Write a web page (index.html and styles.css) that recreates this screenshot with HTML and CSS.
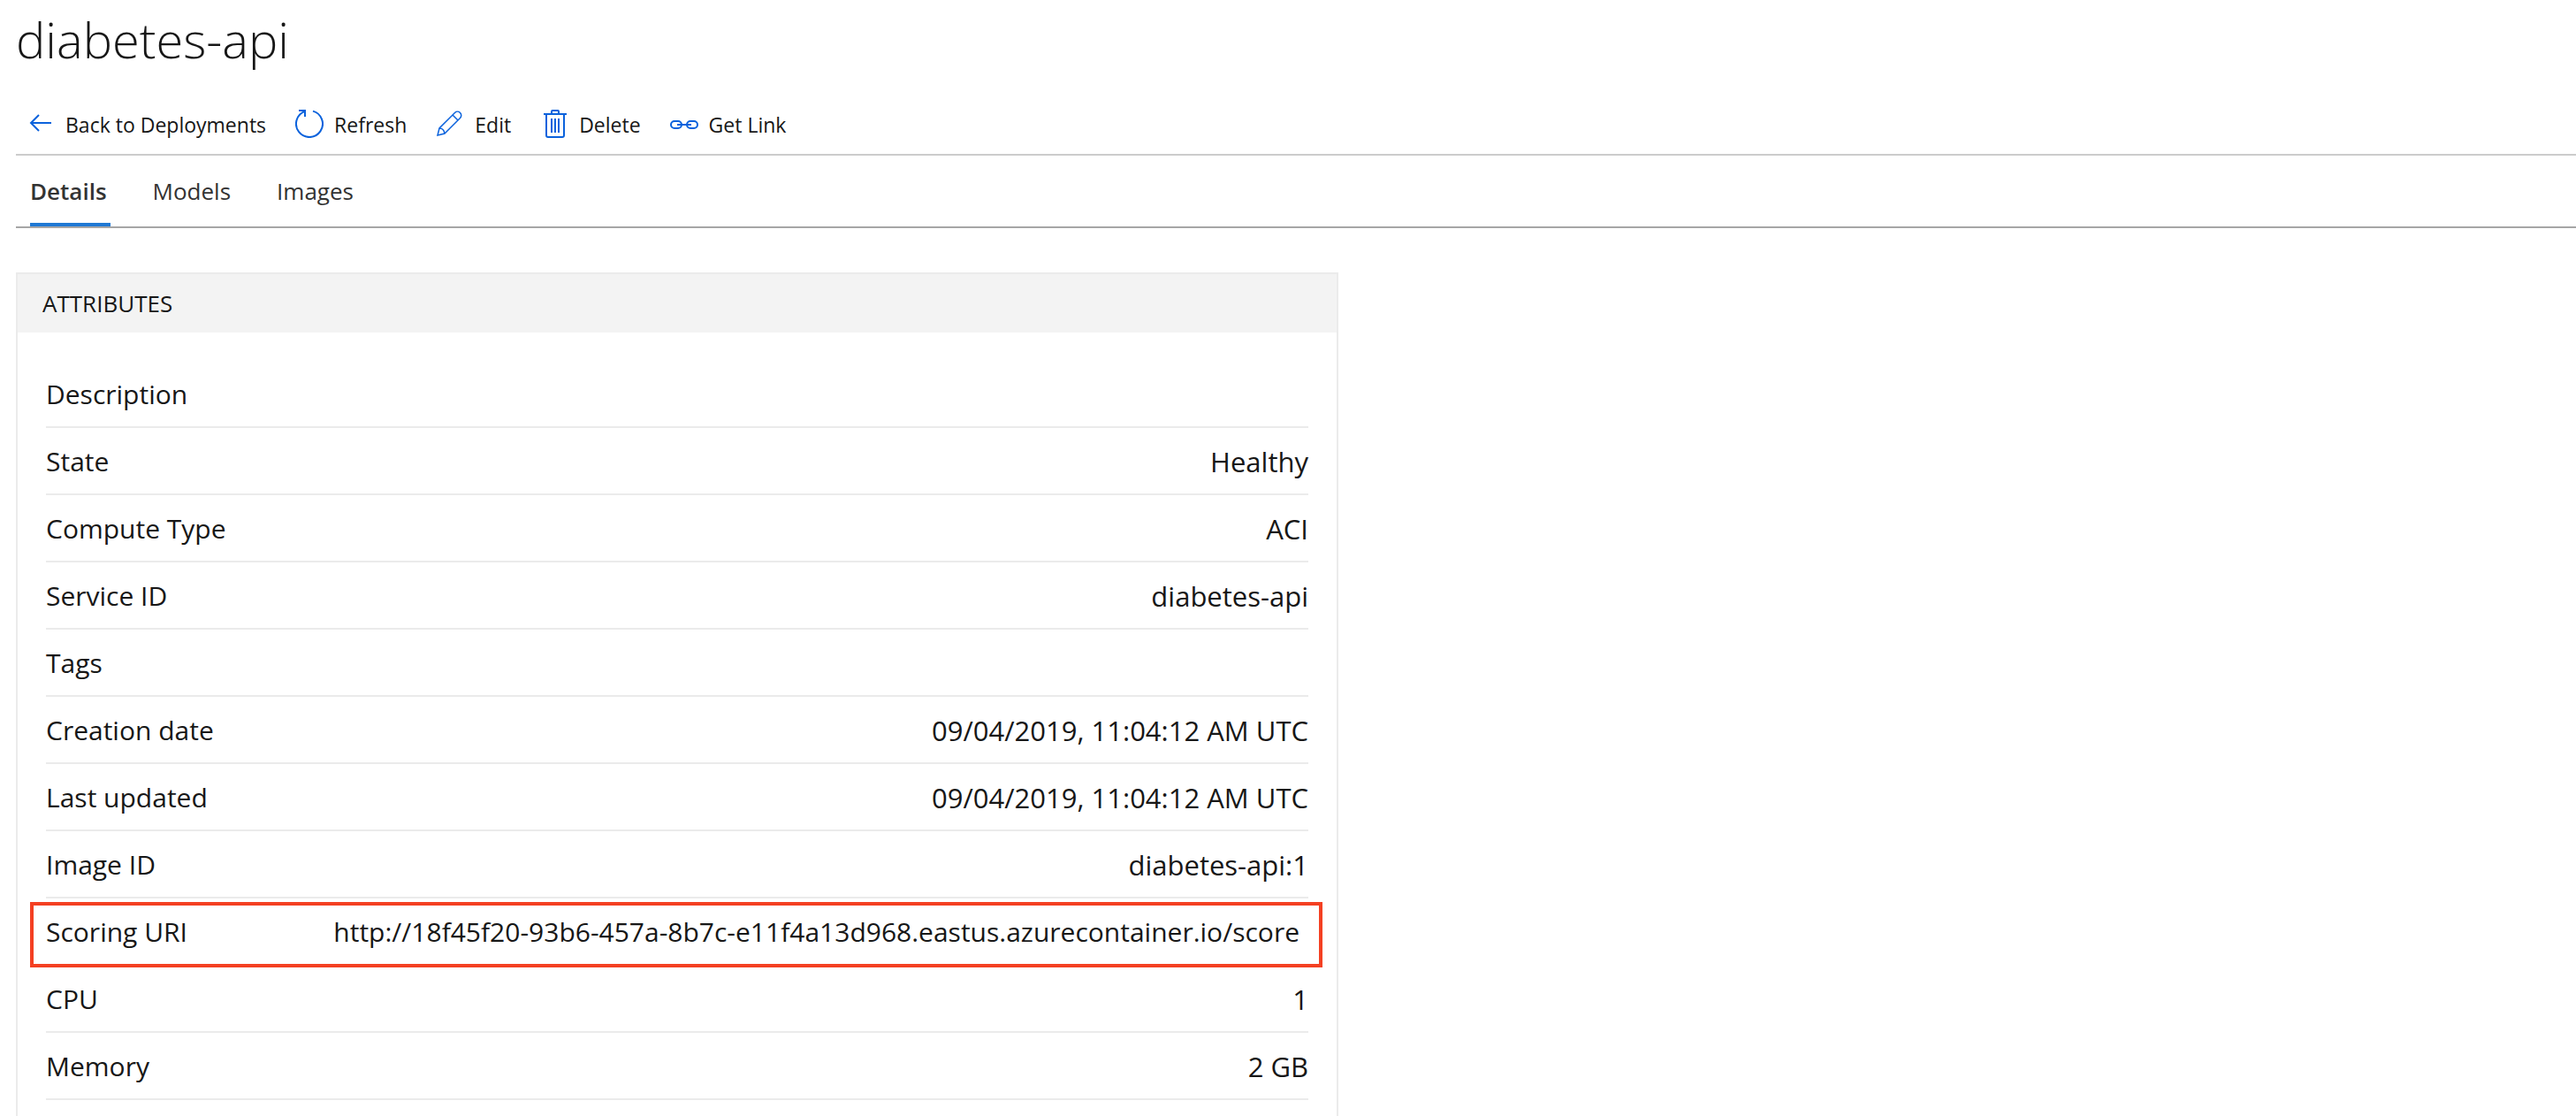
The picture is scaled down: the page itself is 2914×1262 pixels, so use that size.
FILE: index.html
```html
<!DOCTYPE html>
<html lang="en">
<head>
  <meta charset="utf-8">
  <meta name="viewport" content="width=device-width, initial-scale=1">
  <title>diabetes-api</title>
  <link rel="stylesheet" href="styles.css">
</head>
<body>
  <main class="page">
    <h1 class="title">diabetes-api</h1>

    <div class="toolbar">
      <button class="command" type="button">
        <svg class="icon" viewBox="0 0 32 32" aria-hidden="true"><path d="M28 15H5M14 6l-9 9 9 9"/></svg>
        Back to Deployments
      </button>
      <button class="command" type="button">
        <svg class="icon" viewBox="0 0 32 32" aria-hidden="true"><path d="M20 1.600A15 15 0 1 1 11 1.900M4 1h7v7"/></svg>
        Refresh
      </button>
      <button class="command" type="button">
        <svg class="icon thin" viewBox="0 0 32 32" aria-hidden="true"><path d="M2 29l2-8L21.500 3.500a4.200 4.200 0 0 1 6 6L10 27zM19 6l6 6M4 21q5 0 6 6"/></svg>
        Edit
      </button>
      <button class="command" type="button">
        <svg class="icon" viewBox="0 0 32 32" aria-hidden="true"><path d="M4 5h26M7 5v24a2 2 0 0 0 2 2h16a2 2 0 0 0 2-2V5M13 5V2a1 1 0 0 1 1-1h6a1 1 0 0 1 1 1v3M13 10v16M17 10v16M21 10v16"/></svg>
        Delete
      </button>
      <button class="command" type="button">
        <svg class="icon" viewBox="0 0 32 32" aria-hidden="true"><rect x="1" y="13" width="12" height="8" rx="4"/><rect x="19" y="13" width="12" height="8" rx="4"/><path d="M8 17h16"/></svg>
        Get Link
      </button>
    </div>

    <nav class="tabs">
      <a class="tab active" href="#details" aria-current="page">Details</a>
      <a class="tab" href="#models">Models</a>
      <a class="tab" href="#images">Images</a>
    </nav>

    <section class="card" id="details">
      <h2 class="card-title">ATTRIBUTES</h2>
      <div class="card-body">
        <table class="attributes">
          <tbody>
            <tr><th scope="row">Description</th><td></td></tr>
            <tr><th scope="row">State</th><td>Healthy</td></tr>
            <tr><th scope="row">Compute Type</th><td>ACI</td></tr>
            <tr><th scope="row">Service ID</th><td>diabetes-api</td></tr>
            <tr><th scope="row">Tags</th><td></td></tr>
            <tr><th scope="row">Creation date</th><td>09/04/2019, 11:04:12 AM UTC</td></tr>
            <tr><th scope="row">Last updated</th><td>09/04/2019, 11:04:12 AM UTC</td></tr>
            <tr><th scope="row">Image ID</th><td>diabetes-api:1</td></tr>
            <tr class="highlighted"><th scope="row">Scoring URI</th><td>http://18f45f20-93b6-457a-8b7c-e11f4a13d968.eastus.azurecontainer.io/score</td></tr>
            <tr><th scope="row">CPU</th><td>1</td></tr>
            <tr><th scope="row">Memory</th><td>2 GB</td></tr>
          </tbody>
        </table>
      </div>
    </section>
  </main>
</body>
</html>
```
FILE: styles.css
```css
* {
  box-sizing: border-box;
}

body {
  margin: 0;
  background: #fff;
  color: #171717;
  font-family: "Segoe UI", "Open Sans", "Noto Sans", sans-serif;
}

.page {
  display: flex;
  flex-direction: column;
  min-height: 100vh;
  padding: 12px 0 0 18px;
}

.title {
  margin: 0 0 30px;
  font-size: 56px;
  font-weight: 300;
  line-height: 64px;
}

.toolbar {
  display: flex;
  gap: 33px;
  padding: 18px 12px 16px;
  border-bottom: 2px solid #ccc;
}

.command {
  display: flex;
  align-items: flex-start;
  gap: 12px;
  padding: 0;
  border: 0;
  background: none;
  color: inherit;
  font: inherit;
  font-size: 23px;
  line-height: 34px;
  white-space: nowrap;
  cursor: pointer;
}

.icon {
  flex: none;
  width: 32px;
  height: 32px;
  fill: none;
  stroke: #0b62dc;
  stroke-width: 2;
}

.thin {
  stroke-width: 1.5;
}

.tabs {
  display: flex;
  gap: 48px;
  padding: 0 16px;
  border-bottom: 2px solid #a6a6a6;
}

.tab {
  padding: 4px 4px 0 0;
  border-bottom: 4px solid transparent;
  color: #333;
  font-size: 26px;
  line-height: 72px;
  text-decoration: none;
}

.active {
  border-color: #1f78d4;
  font-weight: 600;
}

.card {
  flex: 1;
  width: 100%;
  max-width: 1496px;
  margin-top: 50px;
  border: 2px solid #ebebeb;
  border-bottom: 0;
}

.card-title {
  margin: 0;
  padding: 0 28px;
  background: #f3f3f3;
  font-size: 26px;
  font-weight: 400;
  line-height: 66px;
}

.card-body {
  padding: 32px 32px 16px;
}

.attributes {
  width: 100%;
  border-spacing: 0;
  font-size: 30px;
  line-height: 72px;
}

.attributes th,
.attributes td {
  height: 76px;
  padding: 2px 0 0;
  border-bottom: 2px solid #ebebeb;
  font-weight: 400;
  white-space: nowrap;
}

.attributes th {
  text-align: left;
}

.attributes td {
  font-size: 31px;
  text-align: right;
}

.attributes .highlighted {
  position: relative;
}

.attributes .highlighted td {
  padding-right: 10px;
  font-size: 30px;
}

/* callout frame drawn over the row */
.highlighted::after {
  content: "";
  position: absolute;
  inset: 4px -16px -2px -18px;
  border: 4px solid #f44022;
}
```
